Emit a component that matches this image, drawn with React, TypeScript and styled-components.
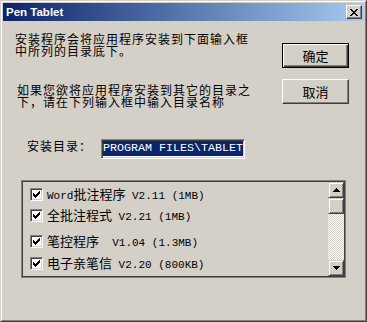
import React from "react";
import styled, { createGlobalStyle, css } from "styled-components";

const GlobalStyle = createGlobalStyle`
  html, body { margin: 0; padding: 0; background: #d4d0c8; }
  body { width: 367px; height: 322px; overflow: hidden; }
  #root { width: 367px; height: 322px; }
`;

const CJK = `"Noto Sans CJK SC", "Noto Sans", sans-serif`;

const raised = css`
  border: 1px solid;
  border-color: #d4d0c8 #404040 #404040 #d4d0c8;
  box-shadow: inset 1px 1px #fff, inset -1px -1px #808080;
`;

const sunken = css`
  border: 1px solid;
  border-color: #808080 #fff #fff #808080;
  box-shadow: inset 1px 1px #404040, inset -1px -1px #d4d0c8;
`;

const Window = styled.div`
  width: 367px;
  height: 322px;
  box-sizing: border-box;
  border: 1px solid;
  border-color: #d4d0c8 #404040 #404040 #d4d0c8;
  background: #d4d0c8;
  font-family: ${CJK};
  color: #000;
`;

const Frame = styled.div`
  height: 100%;
  box-sizing: border-box;
  border: 1px solid;
  border-color: #fff #808080 #808080 #fff;
  padding: 1px;
  display: flex;
  flex-direction: column;
`;

const TitleBar = styled.div`
  height: 18px;
  flex: none;
  display: flex;
  align-items: center;
  justify-content: space-between;
  padding: 0 2px 0 2px;
  background: linear-gradient(to right, #0a246a, #a6caf0);
`;

const TitleText = styled.span`
  color: #fff;
  font: bold 11.5px "Liberation Sans", Arial, sans-serif;
  padding-left: 1px;
`;

const CloseButton = styled.div`
  width: 16px;
  height: 14px;
  box-sizing: border-box;
  border: 1px solid;
  border-color: #fff #404040 #404040 #fff;
  box-shadow: inset -1px -1px #808080;
  background: #d4d0c8;
  display: flex;
  align-items: center;
  justify-content: center;
`;

const Body = styled.div`
  flex: 1;
  display: flex;
  flex-direction: column;
  padding: 0 15px 0 12px;
`;

const TopRow = styled.div`
  display: flex;
  justify-content: space-between;
  align-items: flex-start;
`;

const TextColumn = styled.div`
  padding-top: 12px;
  display: flex;
  flex-direction: column;
`;

const Para = styled.p<{ $indent: number; $gap: number }>`
  margin: ${(p) => p.$gap}px 0 0 0;
  padding-left: ${(p) => p.$indent}px;
  font-size: 12px;
  letter-spacing: 1px;
  line-height: 12px;
  white-space: nowrap;
`;

const ButtonColumn = styled.div`
  padding-top: 22px;
  display: flex;
  flex-direction: column;
  gap: 11px;
`;

const Button = styled.div<{ $default?: boolean }>`
  width: 67px;
  height: 25px;
  box-sizing: border-box;
  display: flex;
  align-items: center;
  justify-content: center;
  font-size: 13px;
  background: #d4d0c8;
  ${(p) =>
    p.$default
      ? css`
          border: 1px solid #000;
          box-shadow: inset 1px 1px #fff, inset -1px -1px #404040,
            inset -2px -2px #808080;
        `
      : css`
          border: 1px solid;
          border-color: #fff #404040 #404040 #fff;
          box-shadow: inset -1px -1px #808080;
        `}
`;

const DirRow = styled.div`
  margin-top: 31px;
  padding-left: 12px;
  display: flex;
  align-items: flex-start;
`;

const DirLabel = styled.span`
  width: 74px;
  margin-top: 1px;
  font-size: 12px;
  letter-spacing: 1px;
  line-height: 12px;
  white-space: nowrap;
`;

const PathInput = styled.div`
  width: 144px;
  height: 20px;
  box-sizing: border-box;
  ${sunken};
  background: #fff;
  padding: 1px;
`;

const Selection = styled.div`
  height: 15px;
  background: #0a246a;
  color: #fff;
  font-family: "Liberation Mono", monospace;
  font-size: 11.67px;
  line-height: 15px;
  white-space: nowrap;
  overflow: hidden;
`;

const ListBox = styled.div`
  margin-top: 21px;
  margin-left: 6px;
  width: 325px;
  height: 98px;
  box-sizing: border-box;
  border: 1px solid #808080;
  box-shadow: inset 0 0 0 1px #404040;
  padding: 1px;
  display: flex;
`;

const Items = styled.div`
  flex: 1;
  padding: 4px 0 0 7px;
  display: flex;
  flex-direction: column;
`;

const Row = styled.div<{ $offset: number }>`
  height: 16px;
  margin-top: ${(p) => p.$offset}px;
  display: flex;
  align-items: center;
  gap: 4px;
`;

const CheckBox = styled.div`
  width: 13px;
  height: 13px;
  box-sizing: border-box;
  ${sunken};
  background: #fff;
  display: flex;
  align-items: center;
  justify-content: center;
`;

const ItemText = styled.span`
  white-space: pre;
  line-height: 16px;
`;

const Cjk = styled.span`
  font-family: ${CJK};
  font-size: 13px;
`;

const Latin = styled.span`
  font-family: "Liberation Mono", monospace;
  font-size: 11px;
`;

const ScrollBar = styled.div`
  width: 16px;
  display: flex;
  flex-direction: column;
`;

const ScrollButton = styled.div`
  height: 16px;
  box-sizing: border-box;
  ${raised};
  background: #d4d0c8;
  display: flex;
  align-items: center;
  justify-content: center;
`;

const Track = styled.div`
  flex: 1;
  background-image: conic-gradient(#fff 25%, #d4d0c8 0 50%, #fff 0 75%, #d4d0c8 0);
  background-size: 2px 2px;
`;

const CloseGlyph = () => (
  <svg width="8" height="7" viewBox="0 0 8 7" shapeRendering="crispEdges">
    <path
      fill="#000"
      d="M0 0h2v1H0z M6 0h2v1H6z M1 1h2v1H1z M5 1h2v1H5z M2 2h4v1H2z M3 3h2v1H3z M2 4h4v1H2z M1 5h2v1H1z M5 5h2v1H5z M0 6h2v1H0z M6 6h2v1H6z"
    />
  </svg>
);

const CheckGlyph = () => (
  <svg width="7" height="7" viewBox="0 0 7 7" shapeRendering="crispEdges">
    <path
      fill="#000"
      d="M6 0h1v1H6z M5 1h2v1H5z M0 2h1v1H0z M4 2h3v1H4z M0 3h2v1H0z M3 3h3v1H3z M0 4h5v1H0z M1 5h3v1H1z M2 6h1v1H2z"
    />
  </svg>
);

const Arrow = ({ up }: { up: boolean }) => (
  <svg width="7" height="4" viewBox="0 0 7 4" shapeRendering="crispEdges">
    <path
      fill="#000"
      d={
        up
          ? "M3 0h1v1H3z M2 1h3v1H2z M1 2h5v1H1z M0 3h7v1H0z"
          : "M0 0h7v1H0z M1 1h5v1H1z M2 2h3v1H2z M3 3h1v1H3z"
      }
    />
  </svg>
);

const isCjk = (ch: string) => /[\u3000-\u9fff\uff00-\uffef]/.test(ch);

const MixedText = ({ text }: { text: string }) => {
  const runs: { cjk: boolean; text: string }[] = [];
  for (const ch of text) {
    const c = isCjk(ch);
    const last = runs[runs.length - 1];
    if (last && last.cjk === c) last.text += ch;
    else runs.push({ cjk: c, text: ch });
  }
  return (
    <ItemText>
      {runs.map((r, i) =>
        r.cjk ? <Cjk key={i}>{r.text}</Cjk> : <Latin key={i}>{r.text}</Latin>
      )}
    </ItemText>
  );
};

const items = [
  { label: "Word批注程序 V2.11 (1MB)", offset: 0 },
  { label: "全批注程式 V2.21 (1MB)", offset: 5 },
  { label: "笔控程序  V1.04 (1.3MB)", offset: 10 },
  { label: "电子亲笔信 V2.20 (800KB)", offset: 6 },
];

export default function App() {
  return (
    <>
      <GlobalStyle />
      <Window>
        <Frame>
          <TitleBar>
            <TitleText>Pen Tablet</TitleText>
            <CloseButton>
              <CloseGlyph />
            </CloseButton>
          </TitleBar>
          <Body>
            <TopRow>
              <TextColumn>
                <Para $indent={0} $gap={0}>
                  安装程序会将应用程序安装到下面输入框
                  <br />
                  中所列的目录底下。
                </Para>
                <Para $indent={2} $gap={27}>
                  如果您欲将应用程序安装到其它的目录之
                  <br />
                  下，请在下列输入框中输入目录名称
                </Para>
              </TextColumn>
              <ButtonColumn>
                <Button $default>确定</Button>
                <Button>取消</Button>
              </ButtonColumn>
            </TopRow>
            <DirRow>
              <DirLabel>安装目录：</DirLabel>
              <PathInput>
                <Selection>PROGRAM FILES\TABLET</Selection>
              </PathInput>
            </DirRow>
            <ListBox>
              <Items>
                {items.map((it) => (
                  <Row key={it.label} $offset={it.offset}>
                    <CheckBox>
                      <CheckGlyph />
                    </CheckBox>
                    <MixedText text={it.label} />
                  </Row>
                ))}
              </Items>
              <ScrollBar>
                <ScrollButton>
                  <Arrow up />
                </ScrollButton>
                <ScrollButton />
                <Track />
                <ScrollButton>
                  <Arrow up={false} />
                </ScrollButton>
              </ScrollBar>
            </ListBox>
          </Body>
        </Frame>
      </Window>
    </>
  );
}
